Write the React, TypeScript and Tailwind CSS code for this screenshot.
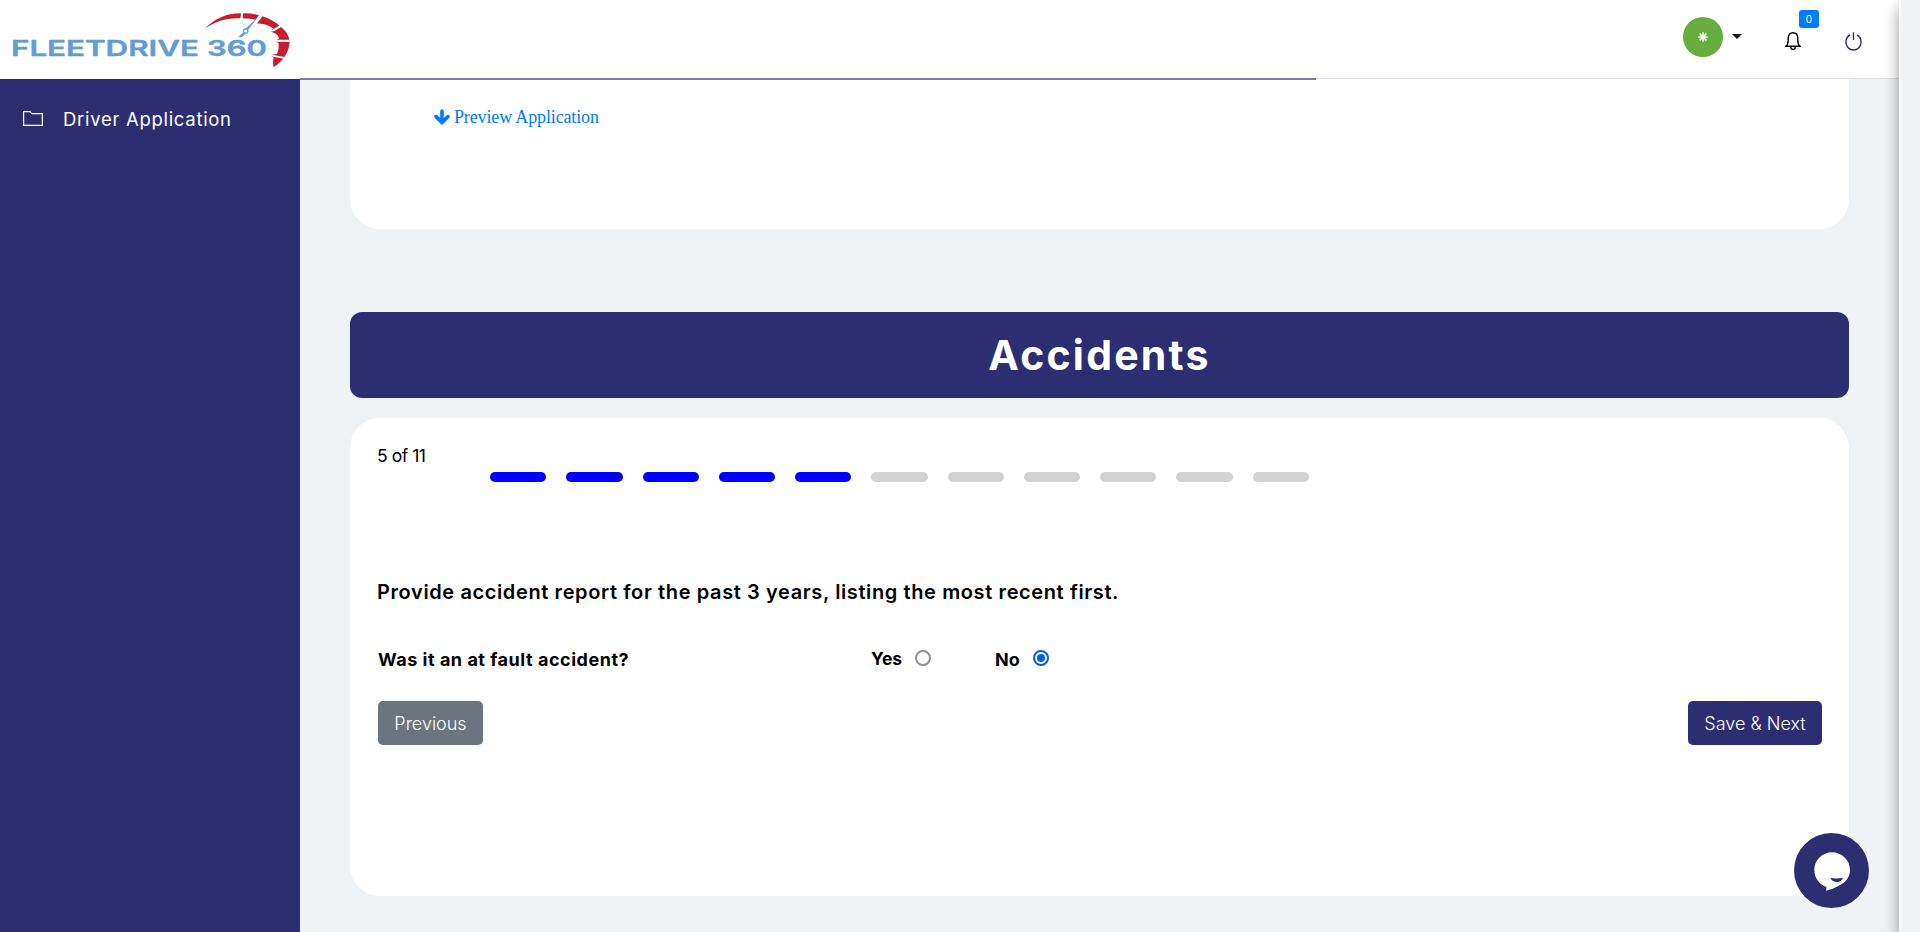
import React from "react";

const TOTAL_STEPS = 11;
const CURRENT_STEP = 5;

function Logo() {
  return (
    <svg width="300" height="78" viewBox="0 0 300 78" role="img" aria-label="Fleetdrive 360">
      <g fill="#629bd6" stroke="#629bd6" strokeWidth="0.4" strokeLinejoin="round" fontFamily="Inter, sans-serif" fontWeight="600" fontSize="22">
        <text x="11" y="56.200" textLength="188" lengthAdjust="spacingAndGlyphs">FLEETDRIVE</text>
        <text x="207" y="56.200" textLength="60" lengthAdjust="spacingAndGlyphs">360</text>
      </g>
      <g fill="#c31f2f">
        <path d="M205 28.500C214 19 227 13 241 13.300L240.500 18.300C227 17.500 215 21.500 205 28.500Z" />
        <path d="M243 13.300C248.500 13 254 13.700 259 15.200L255.500 19.800C251 18.500 246.500 18.300 243 18.500Z" />
        <path d="M262.500 16.300C269 18.500 275 21.500 279.500 25.600L271.500 30.200L273.500 28.500C269 25.500 263 22.800 257 23.500Z" />
        <path d="M281 27C285.500 30.500 288.500 34.800 289.500 39.700L276.500 39.700L279 38.600C278.500 35.500 276.500 33.200 270.500 31.700L274.500 31Z" />
        <path d="M289.600 42C289.500 47 287.500 52.500 284.500 57L271.500 54.700L277 54C278.500 50.500 279 46.500 278.500 42.800L275.500 41.700Z" />
        <path d="M283.300 58.700C280.500 62 277.500 64.700 273.800 67.200C272.800 64 273 61 273.600 57.800L271 56.200Z" />
      </g>
      <g fill="#629bd6">
        <path d="M257.500 17.500L247.500 30.800L245 29Z" />
        <circle cx="245.700" cy="31" r="2.200" fill="white" stroke="#629bd6" strokeWidth="1.300" />
        <path d="M243.200 32.300L245.500 34L242 36.900L238.300 36.900Z" />
      </g>
    </svg>
  );
}

function Header() {
  return (
    <header className="relative flex h-[79px] w-full shrink-0 items-start justify-between bg-white">
      <Logo />
      <div className="flex h-full items-start pr-[37px]">
        <div className="mt-[17px] flex size-10 items-center justify-center rounded-full bg-[#68ae3e] text-white">
          <svg width="10" height="10" viewBox="0 0 10 10" stroke="currentColor" strokeWidth="1.500">
            <path d="M5 .3V9.700M.3 5H9.700M1.600 1.600L8.400 8.400M8.400 1.600L1.600 8.400" />
          </svg>
        </div>
        <svg className="mt-[34px] ml-[9px]" width="10" height="5" viewBox="0 0 10 5">
          <path d="M0 0H10L5 5Z" fill="#111" />
        </svg>
        <div className="relative mt-[32px] ml-[43px] h-[19px] w-[16px]">
          <svg width="16" height="19" viewBox="0 0 17 19" preserveAspectRatio="none" fill="none" stroke="black" strokeWidth="1.500">
            <path d="M1 14.300C3 12.800 3.400 11 3.400 8.300V6.300C3.400 3 5.300 .8 8.500 .8S13.600 3 13.600 6.300V8.300C13.600 11 14 12.800 16 14.300Z" />
            <path d="M6 14.800C6.200 18.400 10.800 18.400 11 14.800" />
          </svg>
          <span className="absolute -top-[22px] left-[14px] flex h-[18px] w-5 items-center justify-center rounded-[3px] bg-[#007bff] text-[10px] leading-none text-white">0</span>
        </div>
        <svg className="mt-[32px] ml-[44px]" width="17" height="19" viewBox="0 0 18 19" preserveAspectRatio="none" fill="none" stroke="#2d2e72" strokeWidth="1.500">
          <path d="M5.400 3C2.700 4.300 1 7 1 10C1 14.500 4.600 18 9 18S17 14.500 17 10C17 7 15.300 4.300 12.600 3M9 .2V8" />
        </svg>
      </div>
      <div className="absolute bottom-0 left-[300px] h-px w-[1599px] bg-[#dfe2e6]" />
      <div className="absolute -bottom-px left-[300px] z-10 h-[2px] w-[1016px] bg-[#7b78aa]" />
    </header>
  );
}

function Sidebar() {
  return (
    <nav className="w-[300px] shrink-0 bg-[#2d2e72] pt-[27px]">
      <a className="flex h-6 items-center pl-[23px] text-white">
        <svg width="20" height="15" viewBox="0 0 20 15" fill="none" stroke="currentColor" strokeWidth="1.200">
          <path d="M.6 14.400V.6H7.200L8.800 2.600H19.400V14.400Z" />
        </svg>
        <span className="mt-[2px] ml-[20px] text-[18.500px] leading-6 tracking-[0.700px] whitespace-nowrap">Driver Application</span>
      </a>
    </nav>
  );
}

function Steps() {
  return (
    <div className="flex w-[819px] gap-5">
      {Array.from({ length: TOTAL_STEPS }, (_, i) => (
        <span key={i} className={i < CURRENT_STEP ? "h-2.5 flex-1 rounded-[5px] bg-[#0000ff]" : "h-2.5 flex-1 rounded-[5px] bg-[#d3d3d3]"} />
      ))}
    </div>
  );
}

function Radio({ checked }: { checked?: boolean }) {
  return (
    <span className={checked ? "flex size-4 items-center justify-center rounded-full border-2 border-[#0060df] bg-white" : "flex size-4 items-center justify-center rounded-full border-2 border-[#8f8f9d] bg-white"}>
      {checked && <span className="size-2 rounded-full bg-[#0060df]" />}
    </span>
  );
}

function ChatButton() {
  return (
    <button className="absolute top-[833px] left-[1794px] z-20 size-[75px] rounded-full bg-[#2d2e72]" aria-label="Chat">
      <svg width="75" height="75" viewBox="0 0 75 75">
        <path d="M38 19.300C47.800 19.300 56 27.300 56 37C56 46.500 49 53 32 57.800L32.500 54C25.500 51.500 20.300 45 20.300 37C20.300 27.300 28.200 19.300 38 19.300Z" fill="white" />
        <path d="M36.300 45C40 45.600 45 45.600 48.900 45C47.500 50.200 38.500 50.200 36.300 45Z" fill="#2d2e72" />
      </svg>
    </button>
  );
}

export default function App() {
  return (
    <div className="relative flex h-[932px] w-[1920px] overflow-hidden bg-[#eff3f6] font-['Inter',sans-serif] text-black">
      <div className="flex h-full w-[1899px] shrink-0 flex-col">
        <Header />
        <div className="flex min-h-0 flex-1">
          <Sidebar />
          <main className="flex flex-1 flex-col pr-[50px] pl-[50px]">
            <section className="h-[150px] shrink-0 rounded-b-[30px] bg-white pt-[26px] pl-[84px]">
              <a className="flex h-6 items-center text-[#007bff]">
                <svg width="16" height="16" viewBox="0 0 16 16" fill="none" stroke="currentColor" strokeWidth="3.600" strokeLinecap="round">
                  <path d="M8 2V13M2 7.600L8 13.400L14 7.600" />
                </svg>
                <span className="ml-1 font-['Liberation_Serif',serif] text-[18px] leading-6 tracking-[-0.140px] whitespace-nowrap">Preview Application</span>
              </a>
            </section>

            <h1 className="mt-[83px] flex h-[86px] shrink-0 items-center justify-center rounded-[12px] bg-[#2d2e72] pt-[2px] text-[41px] font-bold tracking-[2.200px] text-white">
              Accidents
            </h1>

            <section className="mt-5 flex h-[478px] shrink-0 flex-col rounded-[30px] bg-white pt-[26px] pr-[27px] pl-[28px]">
              <div className="flex h-[38px]">
                <span className="-ml-px w-[113px] text-[17.500px] leading-6 tracking-[-0.450px] whitespace-nowrap">5 of 11</span>
                <div className="flex items-end">
                  <Steps />
                </div>
              </div>
              <h2 className="-ml-px mt-[98px] text-[20px] leading-6 font-semibold tracking-[0.610px] whitespace-nowrap">
                Provide accident report for the past 3 years, listing the most recent first.
              </h2>
              <div className="mt-[42px] flex h-6 items-center text-[18px] font-bold whitespace-nowrap">
                <span className="mt-[2px] w-[493px] tracking-[0.530px]">Was it an at fault accident?</span>
                <div className="flex w-[125px] items-center justify-between pr-[65px]">
                  <span className="mt-[2px] text-[17.500px]">Yes</span>
                  <Radio />
                </div>
                <div className="-ml-px flex w-[54px] items-center justify-between">
                  <span className="mt-[2px] text-[18px]">No</span>
                  <Radio checked />
                </div>
              </div>
              <div className="mt-[31px] flex justify-between text-[18px] font-light">
                <button className="h-11 w-[105px] rounded-[5px] bg-[#6c757d] whitespace-nowrap text-white">Previous</button>
                <button className="h-11 w-[134px] rounded-[5px] bg-[#2d2e72] whitespace-nowrap text-white">Save &amp; Next</button>
              </div>
            </section>
          </main>
        </div>
      </div>
      <div className="relative z-10 h-full w-[21px] border-l-2 border-white bg-[#eff3f6] shadow-[0_8px_15px_rgba(0,0,0,0.4)]" />
      <ChatButton />
    </div>
  );
}
